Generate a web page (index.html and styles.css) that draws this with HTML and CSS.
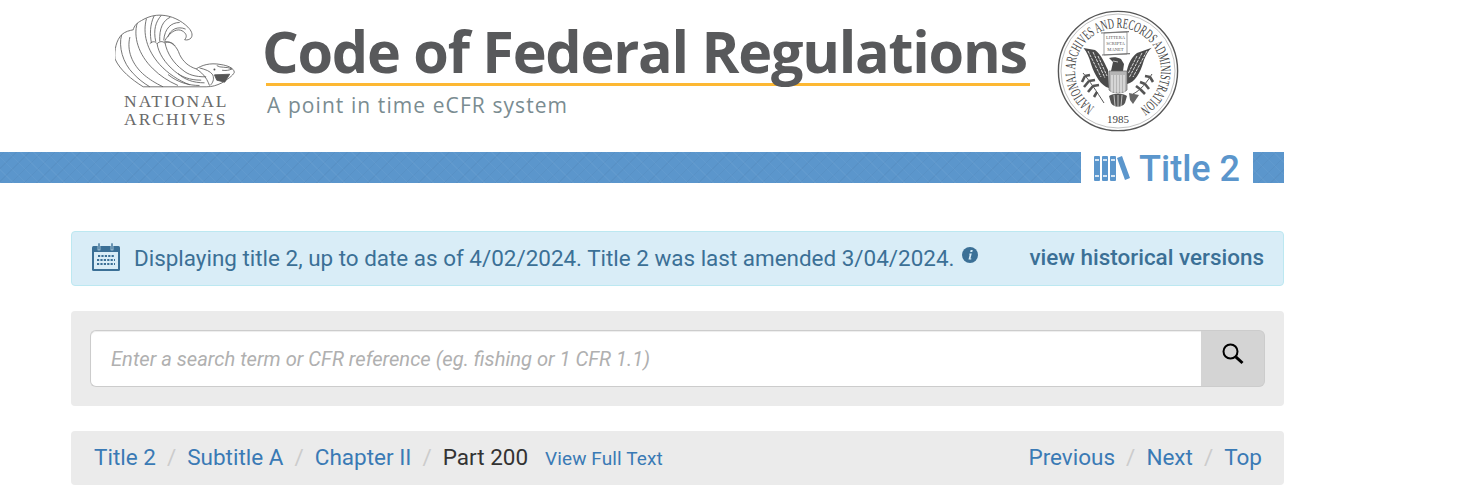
FILE: index.html
```html
<!DOCTYPE html>
<html lang="en">
<head>
  <meta charset="UTF-8" />
  <title>eCFR :: Title 2 Part 200</title>
  <link rel="stylesheet" href="styles.css">
</head>
<body>

  <!-- Masthead -->
  <header class="masthead">
    <div class="nara-logo">
      <svg class="nara-mark" width="120" height="74" viewBox="45 43 362 222" fill="none" stroke="#606060" stroke-width="2.6">
        <path d="M130 262C95 240 60 212 45 178C42 150 50 120 65 105C75 95 90 92 100 90C103 78 110 70 125 62C145 50 165 45 185 46C215 47 245 62 265 82C275 92 281 104 275 114C270 120 262 122 255 120C262 112 262 104 252 96C240 86 222 90 210 104C200 114 195 122 195 126C215 124 232 140 240 165C250 185 265 200 290 208C305 198 330 188 365 195C385 198 403 205 405 218C400 230 385 238 368 250C350 258 340 262 320 262Z" fill="#fff"/>
        <path d="M65 105C55 140 68 190 100 222C115 238 130 250 150 262"/>
        <path d="M90 112C80 150 95 195 135 228C150 240 165 250 190 262"/>
        <path d="M112 70C100 110 115 165 160 208C180 228 205 245 235 258"/>
        <path d="M140 56C128 100 140 150 180 195C205 222 235 242 270 256"/>
        <path d="M163 48C150 75 150 105 155 130"/>
        <path d="M185 46C168 65 160 90 168 126"/>
        <path d="M212 52C190 62 178 85 180 125"/>
        <path d="M240 68C215 68 195 85 192 122"/>
        <path d="M258 88C235 78 212 88 204 112"/>
        <path d="M150 132C158 124 166 124 172 132C180 124 188 124 196 130C206 124 218 128 226 138"/>
        <path d="M172 132C176 160 195 190 225 215M196 130C202 160 220 190 250 212"/>
        <path d="M225 215C245 232 270 242 305 242M250 212C265 225 285 232 320 232"/>
        <path d="M235 222C255 240 280 250 315 250M205 225C235 250 270 258 300 258"/>
        <path d="M290 208C305 218 320 230 330 258"/>
        <path d="M300 205C318 210 332 214 340 226C345 240 340 250 332 258"/>
        <path d="M352 198C362 206 382 200 398 208C390 212 380 214 368 212"/>
        <path d="M345 226L391 224L376 248L352 242Z" fill="#555" stroke="#555"/>
        <circle cx="345" cy="210" r="3" fill="#555" stroke="none"/>
      </svg>
      <div class="nara-name">NATIONAL<br>ARCHIVES</div>
    </div>

    <div class="site-title">
      <h1>Code of Federal Regulations</h1>
      <p>A point in time eCFR system</p>
    </div>

    <svg class="seal" width="122" height="122" viewBox="0 0 122 122">
      <defs>
        <path id="sealRing" d="M37.6 97A43 43 0 1 1 84.4 97"/>
      </defs>
      <circle cx="61" cy="61" r="59.6" fill="#fff" stroke="#555" stroke-width="1.4"/>
      <circle cx="61" cy="61" r="57" fill="none" stroke="#999" stroke-width="0.6"/>
      <text class="seal-text"><textPath href="#sealRing" textLength="222" lengthAdjust="spacingAndGlyphs">NATIONAL ARCHIVES AND RECORDS ADMINISTRATION</textPath></text>
      <text class="seal-year" x="61" y="113" text-anchor="middle">1985</text>
      <!-- scroll -->
      <path d="M47 23L70 22L70 44L47 45Z" fill="#fff" stroke="#777" stroke-width="0.7"/>
      <path d="M44 23L72 21.6M45 45L73 43.6" stroke="#777" stroke-width="1.1"/>
      <text class="seal-scroll" x="58.5" y="29" text-anchor="middle">LITTERA</text>
      <text class="seal-scroll" x="58.5" y="35" text-anchor="middle">SCRIPTA</text>
      <text class="seal-scroll" x="58.5" y="41" text-anchor="middle">MANET</text>
      <!-- wings -->
      <path d="M26.5 38L38 40C44 44 47 52 51 60L52 78C44 76 38 66 34 54C32 47 30 42 26.5 38Z" fill="#4a4a4a"/>
      <path d="M94.7 37.7L80 43C75 47 72 52 70 60L70 74C78 72 83 64 87 50C89 45 91 41 94.7 37.7Z" fill="#4a4a4a"/>
      <path d="M31 41L44 67M36 42L48 68M41 46L50 66M90 41L76 67M85 43L72 68M80 46L71 64" stroke="#ddd" stroke-width="1" stroke-dasharray="3 1"/>
      <!-- head -->
      <path d="M54 61L56 52L52 48C56 47 60 47 64 49L67 54L66 61Z" fill="#4a4a4a"/>
      <path d="M56 51L61 52" stroke="#ddd" stroke-width=".8"/>
      <!-- shield -->
      <path d="M52 61H70V80C66 84 56 84 52 80Z" fill="#b5b5b5" stroke="#666" stroke-width="0.7"/>
      <path d="M55 65V82M58 65V83M61 65V83M64 65V83M67 65V82" stroke="#eee" stroke-width="1.1"/>
      <!-- tail -->
      <path d="M52 86C56 83 66 83 70 86L68 93C65 98 57 98 54 93Z" fill="#555"/>
      <path d="M57 85L58 96M61 85V97M65 85L64 96" stroke="#ddd" stroke-width=".8"/>
      <!-- olive and arrows -->
      <path d="M26 63C32 70 40 82 47 93" stroke="#555" stroke-width="1" fill="none"/>
      <path d="M28 66L25 72M28 66L33 65M32 71L27 77M32 71L38 70M36 76L31 82M36 76L42 75M40 82L37 87" stroke="#555" stroke-width="2.6" fill="none"/>
      <path d="M95 64C90 72 84 80 76 84" stroke="#555" stroke-width="1" fill="none"/>
      <path d="M93 67L96 72M93 67L88 66M88 74L92 79M88 74L83 72M83 79L88 84M83 79L79 76" stroke="#555" stroke-width="2.6" fill="none"/>
      <path d="M72 83L82 85L76 94L73 90Z" fill="#666"/>
    </svg>
  </header>

  <!-- Title strip -->
  <div class="title-strip">
    <div class="stripe stripe-long"></div>
    <div class="strip-title">
      <svg class="books" width="36" height="26" viewBox="0 0 36 26" fill="#5b96cc">
        <rect x="0" y="1" width="6" height="25" rx="1"/>
        <rect x="8" y="1" width="6" height="25" rx="1"/>
        <rect x="16" y="1" width="6" height="25" rx="1"/>
        <path d="M23 3L28 1L36 23L31 25Z"/>
        <path d="M1 5H5M1 21H5M9 5H13M9 21H13M17 5H21M17 21H21" stroke="#fff" stroke-width="1.3"/>
      </svg>
      <span class="strip-label">Title 2</span>
    </div>
    <div class="stripe stripe-end"></div>
  </div>

  <main class="content">

    <!-- Date notice -->
    <div class="notice">
      <svg class="cal" width="28" height="28" viewBox="0 0 28 28">
        <rect x="0" y="3" width="28" height="25" rx="1.5" fill="#3b7096"/>
        <rect x="2" y="9" width="24" height="17" fill="#d9edf7"/>
        <rect x="6" y="0" width="2" height="7" fill="#3b7096" stroke="#d9edf7" stroke-width=".6"/>
        <rect x="19" y="0" width="2" height="7" fill="#3b7096" stroke="#d9edf7" stroke-width=".6"/>
        <path d="M6 13h17M5 17h18M5 21h18" stroke="#3b7096" stroke-width="2.2" stroke-dasharray="2.2 1.2"/>
      </svg>
      <span class="notice-text">Displaying title 2, up to date as of 4/02/2024. Title 2 was last amended 3/04/2024.</span>
      <svg class="info" width="16" height="16" viewBox="0 0 17 17">
        <circle cx="8.5" cy="8.5" r="8.5" fill="#3b7096"/>
        <path d="M9.2 3.2h2.2l-.5 2.1H8.7ZM8 6.8h2.4L9 12.2h1l-.3 1.2H6.9l1.3-5.4H7.5Z" fill="#d9edf7"/>
      </svg>
      <a class="notice-link" href="#">view historical versions</a>
    </div>

    <!-- Search -->
    <form class="search-well">
      <input class="search-input" type="text" placeholder="Enter a search term or CFR reference (eg. fishing or 1 CFR 1.1)">
      <button class="search-btn" type="button" aria-label="Search">
        <svg width="22" height="22" viewBox="0 0 22 22" fill="none" stroke="#000">
          <circle cx="8.5" cy="8.5" r="7" stroke-width="2"/>
          <path d="M13.8 13.8L20.5 20" stroke-width="3"/>
        </svg>
      </button>
    </form>

    <!-- Breadcrumb -->
    <nav class="crumbs">
      <a href="#">Title 2</a><span class="sep">/</span>
      <a href="#">Subtitle A</a><span class="sep">/</span>
      <a href="#">Chapter II</a><span class="sep">/</span>
      <span class="current">Part 200</span>
      <a class="full-text" href="#">View Full Text</a>
      <div class="crumbs-right">
        <a href="#">Previous</a><span class="sep">/</span>
        <a href="#">Next</a><span class="sep">/</span>
        <a href="#">Top</a>
      </div>
    </nav>

  </main>

</body>
</html>
```

FILE: styles.css
```css
/* ---------- Base ---------- */
body{
  margin:0;
  width:1284px;
  font-family:Roboto,sans-serif;
  color:#333;
  background:#fff;
  overflow:hidden;
}
a{color:#3a7ab5;text-decoration:none}

/* ---------- Masthead ---------- */
.masthead{
  display:flex;
  align-items:flex-start;
  height:152px;
  padding-left:115px;
}
.nara-logo{width:120px;margin-top:14px}
.nara-mark{display:block}
.nara-name{
  margin-top:4px;
  padding-left:9px;
  font-family:"Liberation Serif",serif;
  font-size:17.5px;
  line-height:18px;
  letter-spacing:2px;
  color:#6a6a6a;
  white-space:nowrap;
}
.site-title{margin:20px 0 0 31px;width:764px}
.site-title h1{
  margin:0;
  font-family:"Open Sans",sans-serif;
  font-weight:700;
  font-size:57.5px;
  line-height:63px;
  letter-spacing:-1.25px;
  text-indent:-4px;
  color:#58595b;
  border-bottom:3px solid #fdb833;
  white-space:nowrap;
}
.site-title p{
  margin:5px 0 0 1px;
  font-family:"Open Sans",sans-serif;
  font-size:21px;
  line-height:28px;
  letter-spacing:1.08px;
  color:#7a8c91;
}
.seal{margin:10px 0 0 27px}
.seal-text{font-family:"Liberation Serif",serif;font-size:14.5px;fill:#444}
.seal-year{font-family:"Liberation Serif",serif;font-size:11px;fill:#444}
.seal-scroll{font-family:"Liberation Serif",serif;font-size:4.6px;fill:#555}

/* ---------- Title strip ---------- */
.title-strip{display:flex;height:31px}
.stripe{
  background-color:#5b96cc;
  background-image:
    repeating-linear-gradient(45deg,rgba(255,255,255,.04) 0 1px,transparent 1px 9px),
    repeating-linear-gradient(-45deg,rgba(0,0,0,.03) 0 1px,transparent 1px 9px);
}
.stripe-long{flex:1}
.stripe-end{width:31px}
.strip-title{
  display:flex;
  align-items:center;
  gap:9px;
  padding:0 13px;
  color:#5b96cc;
  font-size:36px;
  font-weight:500;
  line-height:31px;
}
.strip-label{padding-top:4px}

/* ---------- Content ---------- */
.content{padding:48px 0 0 71px}

.notice{
  display:flex;
  align-items:center;
  box-sizing:border-box;
  height:55px;
  padding:0 19px 2px 20px;
  margin-bottom:25px;
  background:#d9edf7;
  border:1px solid #bce8f1;
  border-radius:4px;
  color:#3b7096;
  font-size:22.45px;
}
.cal{margin:-2px 14px 0 0;flex:none}
.info{margin:-6px 0 0 8px;flex:none}
.notice-link{margin:-2px 0 0 auto;color:#3b7096;font-weight:500}

.search-well{
  display:flex;
  box-sizing:border-box;
  height:95px;
  padding:19px;
  margin-bottom:25px;
  background:#ebebeb;
  border-radius:4px;
}
.search-input{
  flex:1;
  min-width:0;
  box-sizing:border-box;
  height:57px;
  padding:0 20px;
  border:1px solid #ccc;
  border-right:0;
  border-radius:6px 0 0 6px;
  background:#fff;
  font-family:Roboto,sans-serif;
  font-size:20.15px;
  box-shadow:inset 0 1px 1px rgba(0,0,0,.075);
}
.search-input::placeholder{color:#b0b0b0;font-style:italic;opacity:1}
.search-btn{
  width:64px;
  height:57px;
  padding:0 0 6px;
  background:#d4d4d4;
  border:1px solid #ccc;
  border-left:0;
  border-radius:0 6px 6px 0;
}

.crumbs{
  display:flex;
  align-items:center;
  box-sizing:border-box;
  height:54px;
  padding:0 22px 2px 23px;
  background:#ebebeb;
  border-radius:4px;
  font-size:22.5px;
}
.sep{color:#ccc;margin:0 11px}
.current{color:#333}
.full-text{font-size:19px;margin-left:17px;margin-top:2px;letter-spacing:.1px}
.crumbs-right{margin-left:auto;display:flex;align-items:center}
```
